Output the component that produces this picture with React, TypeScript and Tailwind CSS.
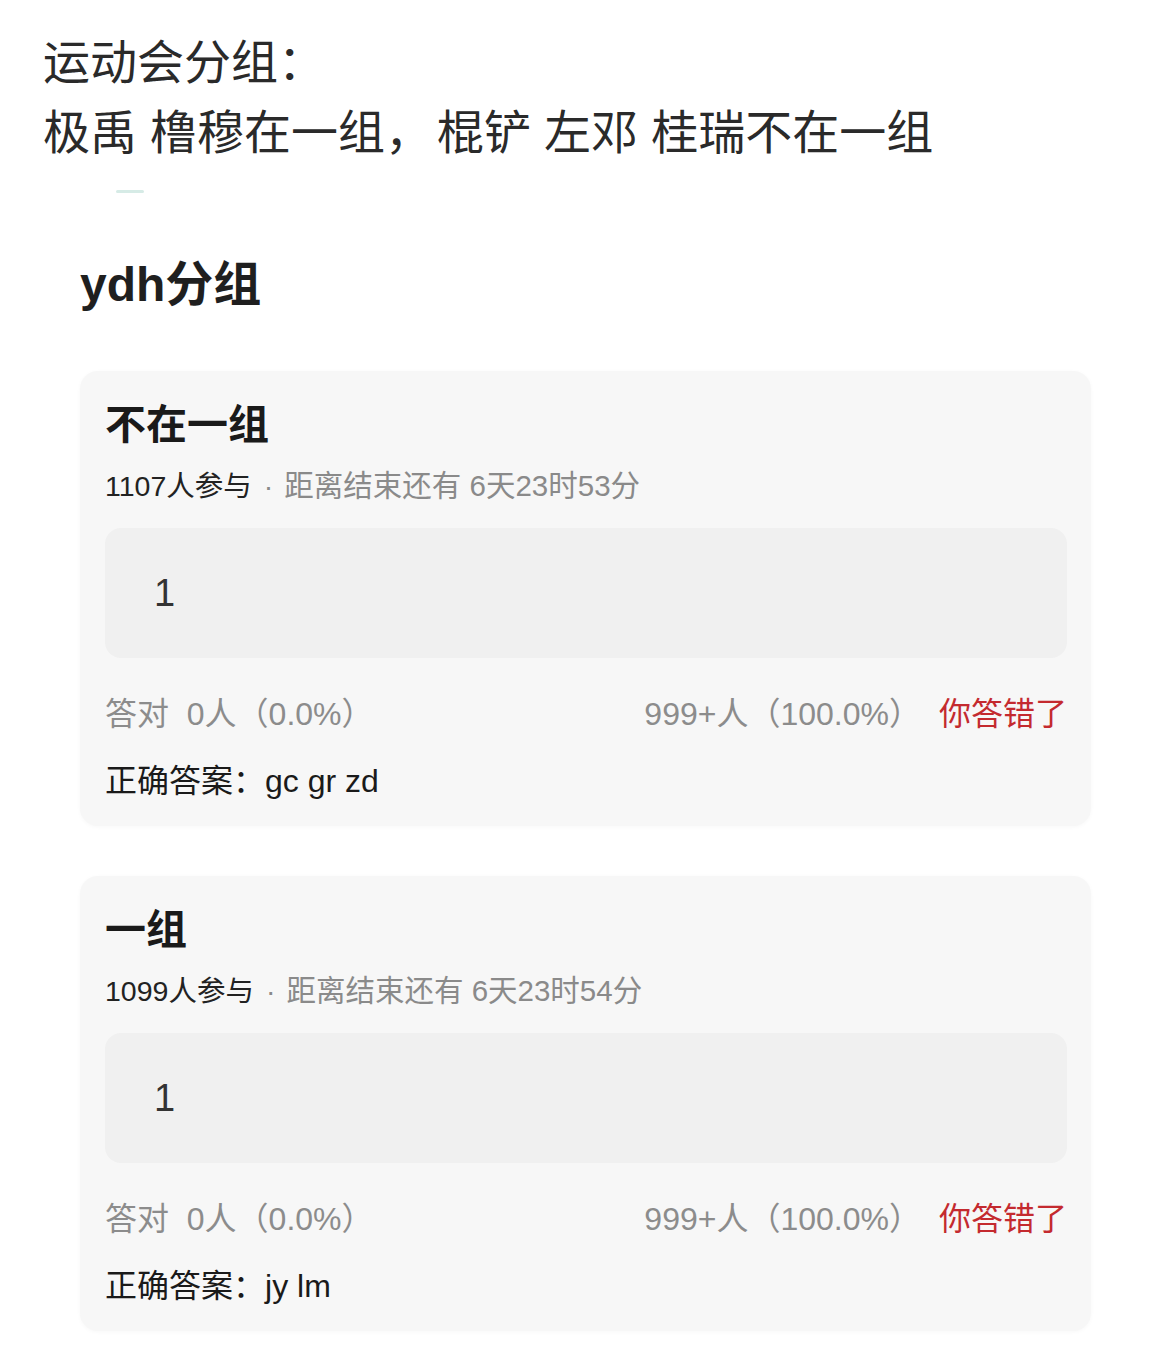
import React from "react";

const font = { fontFamily: '"Liberation Sans", "Noto Sans CJK SC", sans-serif' };

function Card({ title, count, time, answer }: { title: string; count: string; time: string; answer: string }) {
  return (
    <div className="w-[1011px] rounded-[18px] bg-[#f7f7f7] pl-[25px] pr-[24px] pt-[29px] pb-[23px] shadow-[0_1px_4px_rgba(0,0,0,0.03)]">
      <div className="h-[50px] text-[41px] leading-[50px] font-bold text-[#1a1a1a]">{title}</div>
      <div className="mt-[16px] h-[40px] text-[28.5px] leading-[40px] text-[#222]">
        <span>{count}人参与</span>
        <span className="text-[#8a8a8a] ml-[12px] mr-[11px]">·</span>
        <span className="text-[#8a8a8a] text-[29.5px]">距离结束还有 {time}</span>
      </div>
      <div className="mt-[22px] h-[130px] rounded-[16px] bg-[#f0f0f0] pl-[49px] flex items-center">
        <span className="text-[38px] text-[#333] leading-none">1</span>
      </div>
      <div className="mt-[34px] h-[44px] flex items-center justify-between text-[32px] leading-[44px]">
        <span className="text-[#8c8c8c]">答对&nbsp;&nbsp;0人（0.0%）</span>
        <span className="flex items-center">
          <span className="text-[#8c8c8c]">999+人（100.0%）</span>
          <span className="ml-[18px] text-[#c42a2f]">你答错了</span>
        </span>
      </div>
      <div className="mt-[23px] h-[44px] text-[32px] leading-[44px] text-[#1a1a1a]">正确答案：{answer}</div>
    </div>
  );
}

export default function App() {
  return (
    <div className="w-[1170px] h-[1358px] bg-white overflow-hidden" style={font}>
      <div className="pl-[43px] pt-[28px] text-[47px] leading-[70px] text-[#2a2a2a]">
        <div>运动会分组：</div>
        <div>
          极禹 橹穆在一组，<span className="ml-[5px]">棍铲 左邓 桂瑞不在一组</span>
        </div>
      </div>
      <div className="ml-[116px] mt-[22px] h-[3px] w-[28px] rounded-full bg-[#d6ebe6]" />
      <div className="pl-[80px] mt-[64px] h-[56px] text-[48px] leading-[56px] font-bold text-[#1f1f1f]">ydh分组</div>
      <div className="pl-[80px] mt-[58px] flex flex-col gap-[50px]">
        <Card title="不在一组" count="1107" time="6天23时53分" answer="gc gr zd" />
        <Card title="一组" count="1099" time="6天23时54分" answer="jy lm" />
      </div>
    </div>
  );
}
